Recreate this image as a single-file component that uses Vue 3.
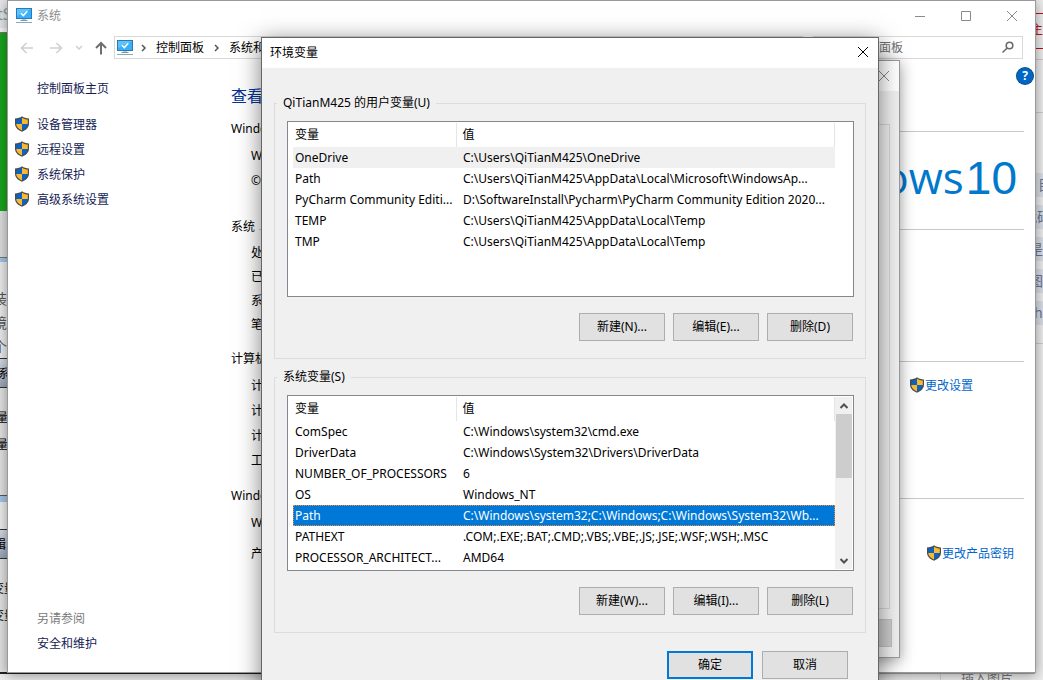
<script setup>
import { ref } from 'vue'

const tasks = ['设备管理器', '远程设置', '系统保护', '高级系统设置']

const groups = [
  {
    title: 'QiTianM425 的用户变量(U)',
    selected: 'OneDrive',
    active: false,
    rows: [
      ['OneDrive', 'C:\\Users\\QiTianM425\\OneDrive'],
      ['Path', 'C:\\Users\\QiTianM425\\AppData\\Local\\Microsoft\\WindowsAp...'],
      ['PyCharm Community Editi...', 'D:\\SoftwareInstall\\Pycharm\\PyCharm Community Edition 2020...'],
      ['TEMP', 'C:\\Users\\QiTianM425\\AppData\\Local\\Temp'],
      ['TMP', 'C:\\Users\\QiTianM425\\AppData\\Local\\Temp'],
    ],
    buttons: ['新建(N)...', '编辑(E)...', '删除(D)'],
  },
  {
    title: '系统变量(S)',
    selected: 'Path',
    active: true,
    rows: [
      ['ComSpec', 'C:\\Windows\\system32\\cmd.exe'],
      ['DriverData', 'C:\\Windows\\System32\\Drivers\\DriverData'],
      ['NUMBER_OF_PROCESSORS', '6'],
      ['OS', 'Windows_NT'],
      ['Path', 'C:\\Windows\\system32;C:\\Windows;C:\\Windows\\System32\\Wb...'],
      ['PATHEXT', '.COM;.EXE;.BAT;.CMD;.VBS;.VBE;.JS;.JSE;.WSF;.WSH;.MSC'],
      ['PROCESSOR_ARCHITECT...', 'AMD64'],
    ],
    buttons: ['新建(W)...', '编辑(I)...', '删除(L)'],
  },
]
const selection = ref(groups.map((g) => g.selected))
</script>

<template>
  <div class="desktop">
    <svg width="0" height="0" class="defs" aria-hidden="true">
      <symbol id="shield" viewBox="0 0 16 16">
        <path d="M8 .3C6.300 1.700 3.700 2.400 1 2.400V7.500C1 11.400 3.800 14 8 15.700C12.200 14 15 11.400 15 7.500V2.400C12.300 2.400 9.700 1.700 8 .3Z" fill="#4b4b4b" />
        <path d="M8 1.700C6.300 2.900 4.500 3.400 2.200 3.500V8H8Z" fill="#0b63c4" />
        <path d="M8 1.700C9.700 2.900 11.500 3.400 13.800 3.500V8H8Z" fill="#fdb92e" />
        <path d="M2.200 8C2.400 11.100 4.600 13 8 14.500V8Z" fill="#fdb92e" />
        <path d="M13.800 8C13.600 11.100 11.400 13 8 14.500V8Z" fill="#0b63c4" />
      </symbol>
      <symbol id="monitor" viewBox="0 0 16 16">
        <rect x="0" y="0" width="16" height="11" fill="#2f79ae" />
        <rect x="1" y="1" width="14" height="9" fill="#35b1fb" />
        <path d="M1 1H15L1 8Z" fill="#5cc3ff" />
        <path d="M5 5.200L7.300 7.500L11.300 3.200" fill="none" stroke="#fff" stroke-width="1.600" />
        <path d="M6 11H10V13H6Z" fill="#b3c9d8" />
        <path d="M4.500 12.500H11.500" stroke="#6d9ab8" />
        <path d="M0 14.500H16" stroke="#8aa6b8" />
      </symbol>
    </svg>

    <div class="edge left-edge" aria-hidden="true">
      <div class="tab-bit">tS</div>
      <div class="green"></div>
      <div class="grey"></div>
      <div class="doc"><span>装</span><span>境</span><span>个</span></div>
      <div class="chip"><span>系</span></div>
      <div class="panel"><span>量</span><span>量</span></div>
      <div class="sheet"></div>
      <div class="chip"><span>辑</span></div>
      <div class="panel last"><span>变量</span><span>变量</span></div>
    </div>
    <div class="edge right-edge" aria-hidden="true">
      <div class="red-box">主</div>
      <div class="rule"></div>
      <div class="rule"></div>
      <div class="marks"><span>目</span><span>代码</span><span>是</span><span>图</span><span>h</span></div>
      <div class="rule"></div>
    </div>
    <div class="below"><span>插入图片</span></div>

    <section class="window system">
      <header class="titlebar">
        <svg class="mon"><use href="#monitor" /></svg>
        <span class="caption">系统</span>
        <div class="controls">
          <button aria-label="最小化"><svg viewBox="0 0 12 12"><path d="M1 6.500H11" /></svg></button>
          <button aria-label="最大化"><svg viewBox="0 0 12 12"><path d="M1.500 1.500H10.500V10.500H1.500Z" /></svg></button>
          <button aria-label="关闭"><svg viewBox="0 0 12 12"><path d="M1 1L11 11M11 1L1 11" /></svg></button>
        </div>
      </header>
      <nav class="navbar">
        <div class="arrows">
          <button aria-label="后退"><svg viewBox="0 0 14 14"><path d="M13 7H1.500M6.500 2L1.500 7L6.500 12" /></svg></button>
          <button aria-label="前进"><svg viewBox="0 0 14 14"><path d="M1 7H12.500M7.500 2L12.500 7L7.500 12" /></svg></button>
          <button aria-label="最近" class="small"><svg viewBox="0 0 14 14"><path d="M4 5L7 8L10 5" /></svg></button>
          <button aria-label="向上" class="up"><svg viewBox="0 0 14 14"><path d="M7 13.500V2M2 7L7 2L12 7" /></svg></button>
        </div>
        <div class="crumbs">
          <svg class="mon"><use href="#monitor" /></svg>
          <svg class="chev" viewBox="0 0 6 8"><path d="M1 1L4 4L1 7" /></svg>
          <a href="#">控制面板</a>
          <svg class="chev" viewBox="0 0 6 8"><path d="M1 1L4 4L1 7" /></svg>
          <a href="#">系统和</a>
        </div>
        <div class="search">
          <input type="text" placeholder="搜索控制面板" aria-label="搜索控制面板" />
          <svg viewBox="0 0 14 14"><circle cx="8.500" cy="4.500" r="3.300" /><path d="M6.200 7L1.500 11.500" /></svg>
        </div>
      </nav>
      <div class="body">
        <aside>
          <a href="#" class="home">控制面板主页</a>
          <ul>
            <li v-for="t in tasks" :key="t">
              <svg class="shield"><use href="#shield" /></svg><a href="#">{{ t }}</a>
            </li>
          </ul>
          <div class="also">另请参阅</div>
          <a href="#" class="also-link">安全和维护</a>
        </aside>
        <main>
          <h1>查看</h1>
          <h2>Windows</h2>
          <div class="with-logo">
            <div class="items"><p>W</p><p>©</p></div>
            <div class="brand"><span>dows</span><b>10</b></div>
          </div>
          <h2>系统</h2>
          <div class="items tight"><p>处</p><p>已</p><p>系</p><p>笔</p></div>
          <h2>计算机</h2>
          <div class="items">
            <p>计<span class="action inset"><svg class="shield"><use href="#shield" /></svg><a href="#">更改设置</a></span></p>
            <p>计</p><p>计</p><p>工</p>
          </div>
          <h2>Windows</h2>
          <div class="items activation">
            <p>W</p>
            <p>产<span class="action"><svg class="shield"><use href="#shield" /></svg><a href="#">更改产品密钥</a></span></p>
          </div>
        </main>
        <button class="help" aria-label="帮助">?</button>
      </div>
    </section>

    <section class="window props" aria-label="系统属性">
      <header><button aria-label="关闭"><svg viewBox="0 0 12 12"><path d="M1 1L11 11M11 1L1 11" /></svg></button></header>
      <div class="page"></div>
      <footer><button aria-label="应用"></button></footer>
    </section>

    <section class="window env" role="dialog" aria-label="环境变量">
      <header>
        <span>环境变量</span>
        <button aria-label="关闭"><svg viewBox="0 0 12 12"><path d="M1 1L11 11M11 1L1 11" /></svg></button>
      </header>
      <fieldset v-for="(g, i) in groups" :key="g.title">
        <legend>{{ g.title }}</legend>
        <div class="list">
          <table>
            <thead><tr><th>变量</th><th>值</th></tr></thead>
            <tbody>
              <tr
                v-for="r in g.rows"
                :key="r[0]"
                :class="{ active: g.active && selection[i] === r[0], idle: !g.active && selection[i] === r[0] }"
                @click="selection[i] = r[0]"
              >
                <td>{{ r[0] }}</td><td>{{ r[1] }}</td>
              </tr>
            </tbody>
          </table>
          <div class="track" :class="{ shown: g.active }">
            <template v-if="g.active">
              <button aria-label="向上滚动"><svg viewBox="0 0 10 8"><path d="M1.500 6L5 2.500L8.500 6" /></svg></button>
              <div class="thumb"></div>
              <button aria-label="向下滚动"><svg viewBox="0 0 10 8"><path d="M1.500 2L5 5.500L8.500 2" /></svg></button>
            </template>
          </div>
        </div>
        <div class="actions"><button v-for="b in g.buttons" :key="b" class="btn">{{ b }}</button></div>
      </fieldset>
      <footer><button class="btn primary">确定</button><button class="btn">取消</button></footer>
    </section>
  </div>
</template>

<style>
html, body { margin: 0; overflow: hidden; }
</style>

<style scoped>
* { box-sizing: border-box; }
.desktop {
  position: relative; height: 100vh; overflow: hidden; background: #f3f3f3;
  font: 12px/20px "Noto Sans", "Noto Sans CJK SC", sans-serif; color: #000;
}
.defs { position: absolute; }
button { font: inherit; color: inherit; border: 0; padding: 0; background: none; }
a { color: inherit; text-decoration: none; }
ul, p, h1, h2 { margin: 0; padding: 0; list-style: none; font-weight: 400; }
svg { display: block; fill: none; stroke: none; flex: none; }
.mon { width: 16px; height: 16px; }
.shield { width: 16px; height: 16px; }
.window { position: absolute; }

.edge { position: absolute; top: 0; bottom: 0; width: 8px; overflow: hidden; display: flex; flex-direction: column; white-space: nowrap; }
.left-edge { left: 0; background: #e3e3e3; }
.tab-bit { height: 32px; font-size: 16px; line-height: 28px; color: #8a9a9a; background: #e6e7e9; border-bottom: 4px solid #f5f5f5; text-indent: -3px; }
.green { height: 179px; background: #1aa51e; border-top: 1px solid #777; }
.grey { height: 47px; background: #dedede; border-bottom: 1px solid #6b7a86; }
.doc { height: 101px; border-top: 4px solid #a4c5e6; background: #ececec; padding-top: 27px; color: #555; border-bottom: 1px solid #333; font-size: 14px; }
.doc span, .panel span { display: block; height: 24px; text-indent: -7px; }
.chip { height: 29px; padding-top: 5px; text-indent: -2px; background: linear-gradient(#d5dce6, #99a5b8); border-bottom: 1px solid #333; }
.panel { height: 108px; padding-top: 20px; }
.panel span { height: 27px; text-indent: -4px; }
.sheet { height: 34px; border-top: 6px solid #a4c5e6; border-bottom: 1px solid #333; background: #eee; outline: 1px solid #556; }
.sheet + .chip { text-indent: -6px; }
.panel.last { flex: 1; border-bottom: 7px solid #333; }
.panel.last span { text-indent: -8px; }
.right-edge { right: 0; background: #ededed; }
.red-box { margin-top: 13px; height: 36px; border-top: 1px solid #c00f1a; border-bottom: 1px solid #c00f1a; background: #efefef; color: #c00f1a; line-height: 32px; text-indent: -4px; }
.rule { height: 1px; background: #ccc; margin-top: 10px; }
.rule + .rule { margin-top: 52px; }
.marks { margin-top: 60px; color: #6d7390; font-size: 14px; }
.marks span { display: block; height: 24px; line-height: 24px; margin-bottom: 8px; background: #d9dee6; text-indent: -6px; }
.marks span:first-child { text-indent: 3px; }
.marks span:nth-child(2) { text-indent: -12px; }
.marks span:last-child { text-indent: -1px; }
.below { position: absolute; left: 0; right: 8px; bottom: 0; height: 8px; overflow: hidden; border-top: 2px solid; border-image: linear-gradient(90deg, #222 50%, #aaa 50%) 1; background: #ededed; display: flex; justify-content: flex-end; padding-right: 22px; }
.below span { font-size: 13px; line-height: 20px; color: #777; margin-top: -7px; border-left: 1px solid #d0d0d0; padding-left: 20px; }

.system { left: 7px; right: 7px; top: 0; bottom: 7px; background: #fff; border: 1px solid #999; box-shadow: 0 2px 12px rgba(0, 0, 0, .4); }
.titlebar { height: 30px; display: flex; align-items: center; padding-left: 8px; gap: 5px; color: #8c8c8c; }
.controls { margin-left: auto; display: flex; }
.controls button { width: 46px; height: 30px; display: grid; place-items: center; }
.controls svg, .props header svg, .env header svg { width: 12px; height: 12px; stroke: #8a8a8a; }
.navbar { height: 33px; display: flex; align-items: center; padding: 0 12px 0 12px; }
.arrows { width: 94px; display: flex; align-items: center; gap: 15px; }
.arrows svg { width: 14px; height: 14px; stroke: #cfcfcf; stroke-width: 1.500; }
.arrows .small { margin: 0 -7px 0 -6px; }
.arrows .up svg { stroke: #6e6e6e; stroke-width: 2; }
.crumbs { flex: 1; height: 23px; border: 1px solid #d9d9d9; display: flex; align-items: center; padding-left: 2px; }
.crumbs a { margin-right: 10px; }
.chev { width: 6px; height: 8px; stroke: #555; stroke-width: 1.500; margin: 0 8px; }
.crumbs .mon + .chev { margin-right: 9px; }
.crumbs a + .chev { margin: 0 9px 0 0; }
.search { width: 210px; height: 23px; border: 1px solid #d9d9d9; margin-left: 10px; display: flex; align-items: center; justify-content: space-between; padding: 0 7px 0 17px; }
.search input { width: 130px; border: 0; padding: 0; font: inherit; background: none; outline: 0; }
.search input::placeholder { color: #6d6d6d; opacity: 1; }
.search svg { width: 14px; height: 14px; stroke: #6a6a6a; stroke-width: 1.600; }
.body { display: grid; grid-template-columns: 223px 1fr; height: calc(100% - 63px); position: relative; }
aside { display: flex; flex-direction: column; padding: 15px 0 18px 29px; color: #151c55; }
.home { margin-bottom: 13px; }
aside li { display: flex; align-items: center; height: 25px; gap: 7px; margin-left: -23px; }
li .shield, .action .shield { margin-bottom: 2px; }
.also { margin-top: auto; color: #7a7a7a; height: 25px; }
main { padding: 20px 11px 0 0; white-space: nowrap; }
h1 { font-size: 16px; line-height: 24px; color: #003399; margin-bottom: 11px; }
h2 { font-size: 12px; line-height: 20px; display: flex; align-items: center; gap: 4px; margin: 13px 0 4px; }
h2::after { content: ""; flex: 1; height: 1px; background: #c8c8c8; margin-top: 4px; }
h1 + h2 { margin-top: 0; }
.with-logo + h2 { margin-top: 24px; }
.tight + h2 { margin-top: 12px; }
.items { padding-left: 20px; }
.items p { height: 25px; line-height: 25px; display: flex; justify-content: space-between; }
.items.tight p { height: 24px; line-height: 24px; }
.activation p + p { margin-top: 6px; }
.with-logo { display: flex; justify-content: space-between; height: 50px; }
.brand { color: #0078cc; font: 400 44px/60px "Open Sans", sans-serif; display: flex; align-items: baseline; gap: 2px; padding-right: 7px; margin-top: 4px; }
.brand b { font: 400 46px/60px "Liberation Sans", sans-serif; }
.action { display: flex; align-items: center; color: #0066cc; margin-right: 10px; }
.action.inset { margin-right: 51px; }
.help { position: absolute; right: 2px; top: 4px; width: 16px; height: 16px; border-radius: 50%; background: #0067c5; color: #fff; font-weight: 700; line-height: 16px; box-shadow: 0 0 0 1px #0c4b8a; }

.props { left: 480px; right: 143px; top: 60px; bottom: 22px; background: #f0f0f0; border: 1px solid #999; box-shadow: 0 3px 14px rgba(0, 0, 0, .4); display: flex; flex-direction: column; padding: 0 7px 10px; }
.props header { height: 30px; margin: 0 -7px; background: #fff; display: flex; justify-content: flex-end; align-items: center; padding-right: 9px; }
.page { flex: 1; margin: 33px 2px 10px 0; border: 1px solid #d5d5d5; }
.props footer { display: flex; justify-content: flex-end; }
.props footer button { width: 85px; height: 28px; background: #ccc; border: 1px solid #bfbfbf; }

.env { left: 261px; right: 164px; top: 37px; background: #f0f0f0; border: 1px solid #666; box-shadow: 0 4px 22px rgba(0, 0, 0, .5); padding-bottom: 12px; }
.env header { height: 30px; background: #fff; display: flex; align-items: center; justify-content: space-between; padding: 0 9px 0 8px; }
.env header svg { stroke: #000; margin-bottom: 2px; }
.env header + fieldset { margin-top: 25px; }
fieldset { margin: 8px 12px 0; border: 1px solid #dcdcdc; padding: 8px 11px 17px 12px; min-width: 0; }
legend { padding: 0 6px; margin-left: -10px; }
.list { height: 176px; border: 1px solid #828790; background: #fff; display: flex; padding: 1px 1px 1px 5px; overflow: hidden; }
table { flex: 1; border-collapse: collapse; table-layout: fixed; width: 0; white-space: nowrap; height: max-content; }
th { height: 24px; padding: 0 0 0 2px; font-weight: 400; text-align: left; border-right: 1px solid #e5e5e5; }
th:first-child { width: 163px; }
td { height: 21px; padding: 0 0 0 2px; line-height: 21px; }
th + th { padding-left: 6px; }
td + td { padding-left: 7px; }
.idle { background: #f0f0f0; }
.active { background: #0078d7; color: #fff; outline: 1px dotted #ff8a28; outline-offset: -1px; }
.track { width: 17px; display: flex; flex-direction: column; }
.track.shown { background: #f0f0f0; }
.track button { height: 17px; display: grid; place-items: center; }
.track svg { width: 10px; height: 8px; stroke: #505050; stroke-width: 2; }
.thumb { height: 64px; margin: 0 0 auto 1px; background: #cdcdcd; }
.actions { display: flex; justify-content: flex-end; gap: 8px; margin-top: 16px; padding-right: 1px; }
.btn { width: 86px; height: 28px; border: 1px solid #adadad; background: #e1e1e1; }
.btn.primary { border: 2px solid #0078d7; }
.env footer { display: flex; justify-content: flex-end; gap: 9px; margin: 18px 30px 0 0; }
</style>
